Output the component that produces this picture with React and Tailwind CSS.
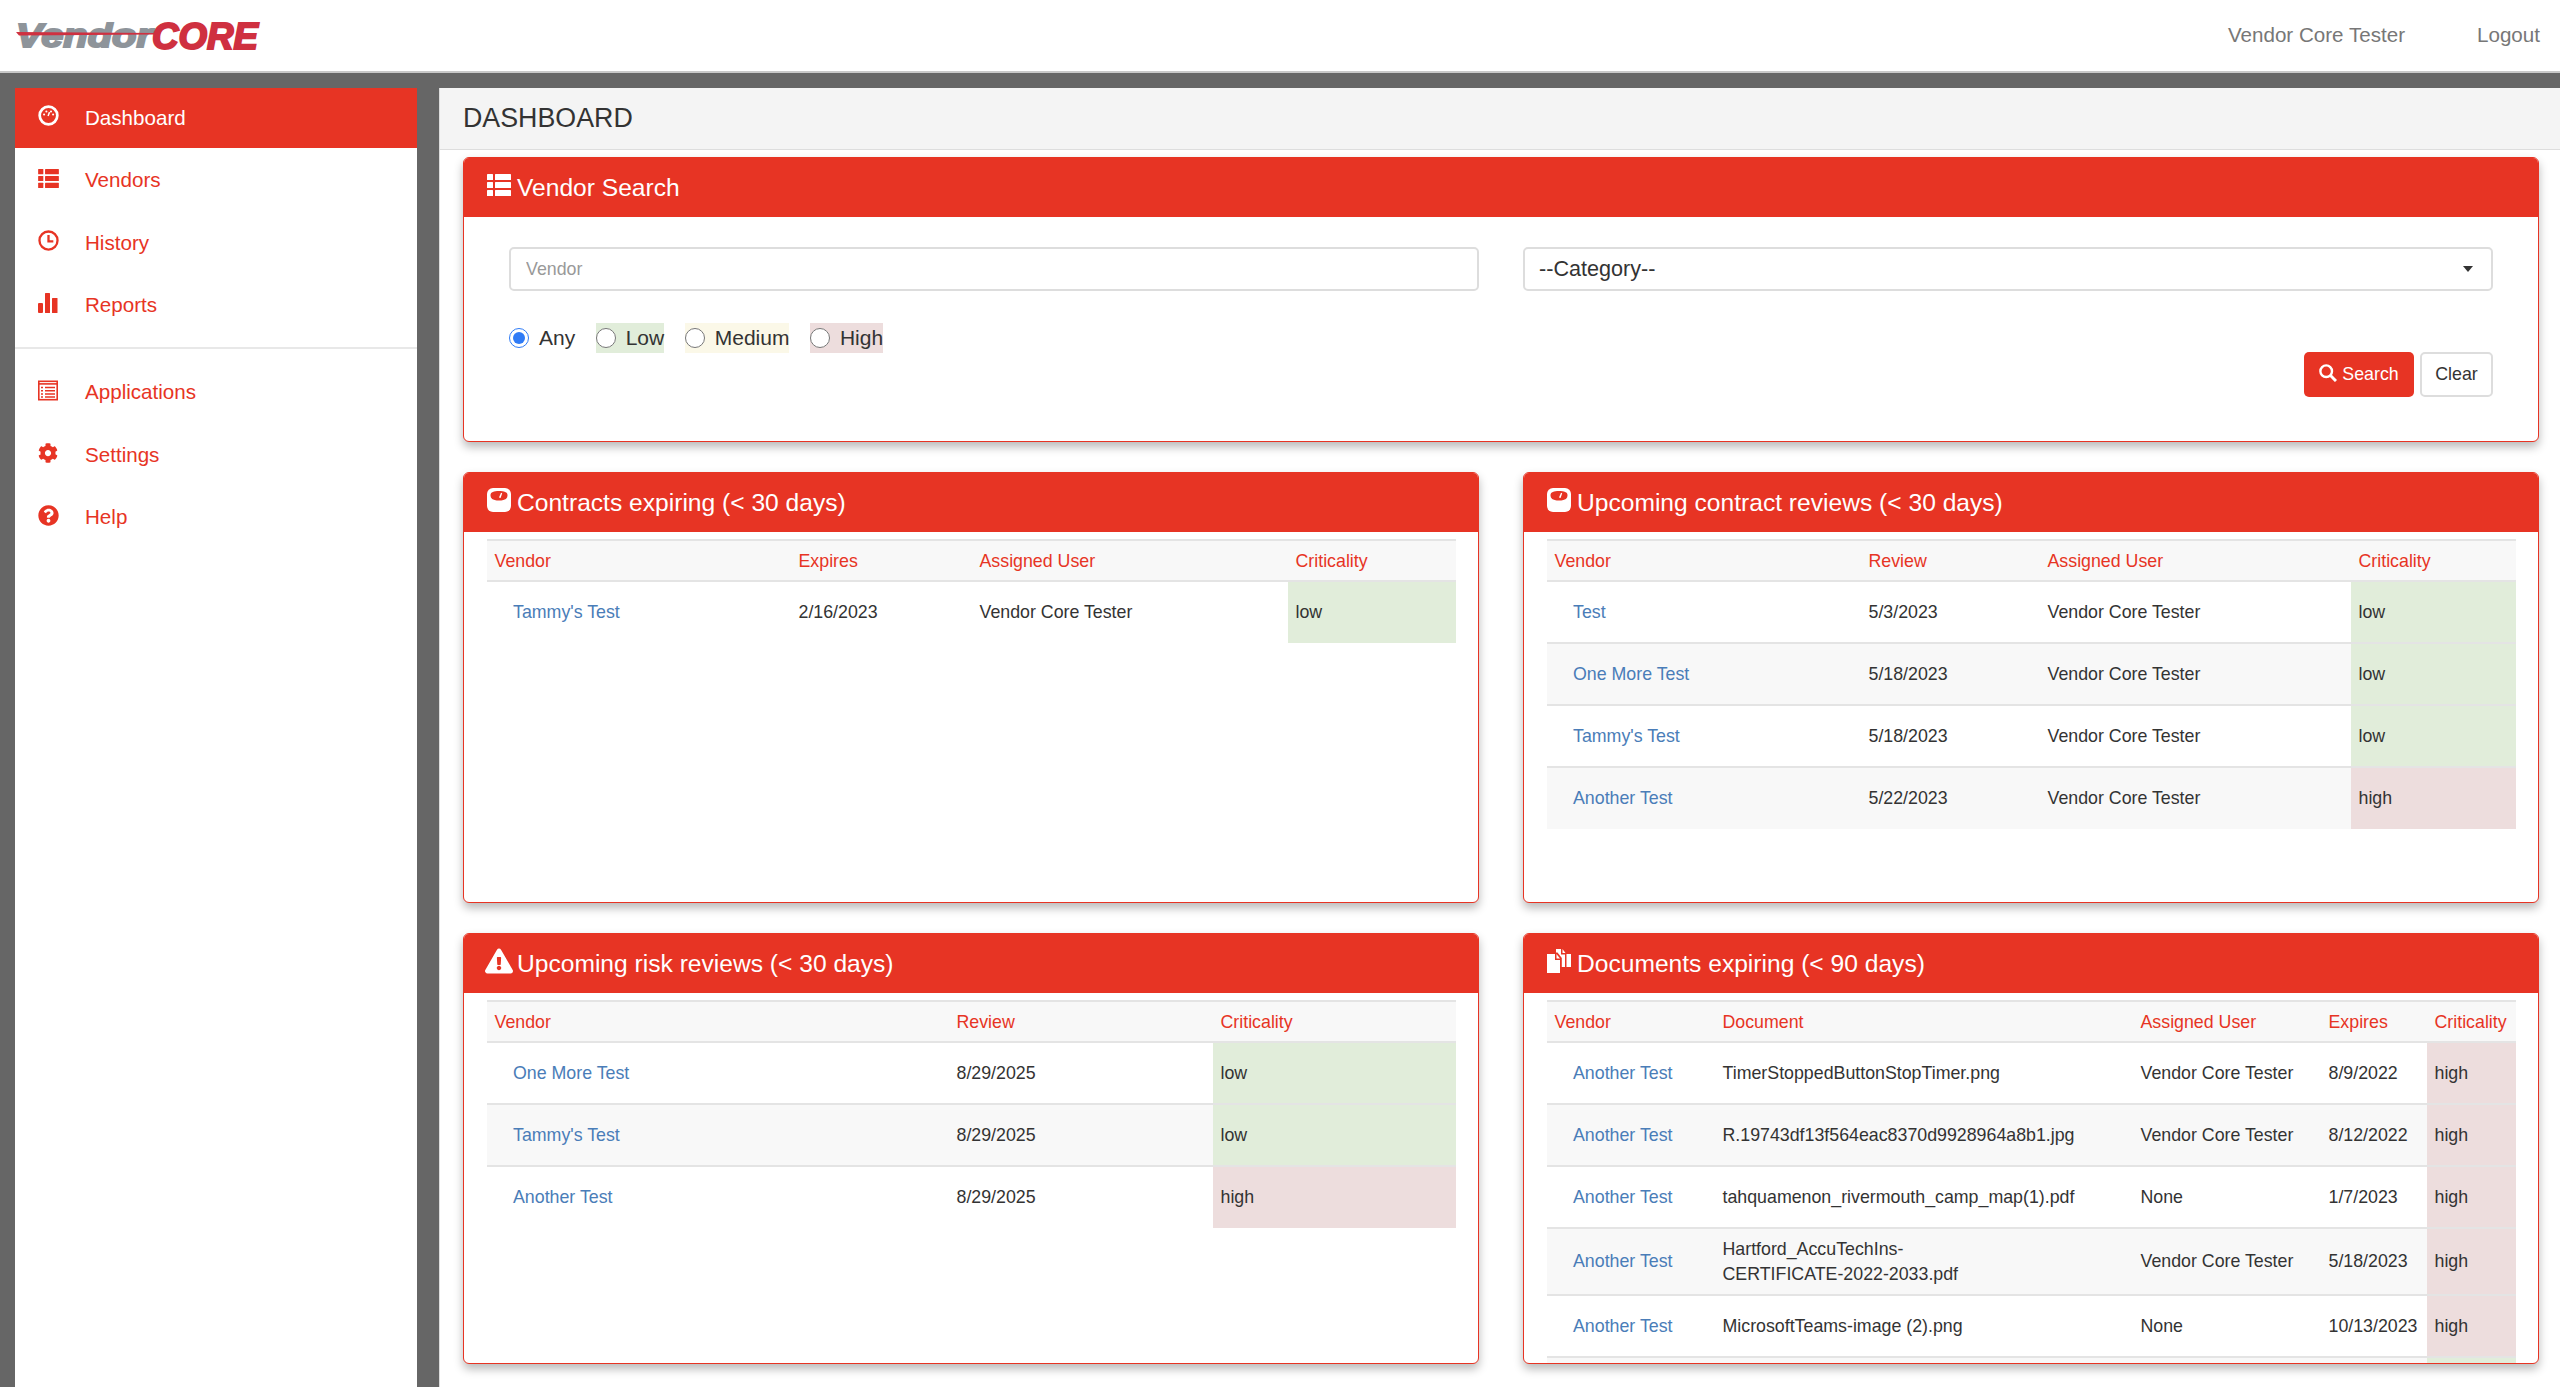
import { FaCog, FaExclamationTriangle, FaQuestionCircle } from "react-icons/fa";

const font = { fontFamily: '"Liberation Sans", Arial, sans-serif' };

const DashIcon = () => (
    <svg viewBox="0 0 20 20" className="w-[21px] h-[21px]">
        <circle cx="10" cy="10" r="8.4" fill="none" stroke="currentColor" strokeWidth="2.6" />
        <circle cx="5.8" cy="9" r="1" fill="currentColor" />
        <circle cx="8" cy="6.2" r="1" fill="currentColor" />
        <circle cx="12.4" cy="6.2" r="1" fill="currentColor" />
        <circle cx="14.4" cy="9" r="1" fill="currentColor" />
        <path d="M9.6 10.4 L11 6.8" stroke="currentColor" strokeWidth="1.4" />
    </svg>
);

const ListIcon = ({ className }) => (
    <svg viewBox="0 0 24 22" className={className} fill="currentColor">
        <rect x="0" y="0" width="6" height="6" rx="0.6" />
        <rect x="8" y="0" width="16" height="6" rx="0.6" />
        <rect x="0" y="8" width="6" height="6" rx="0.6" />
        <rect x="8" y="8" width="16" height="6" rx="0.6" />
        <rect x="0" y="16" width="6" height="6" rx="0.6" />
        <rect x="8" y="16" width="16" height="6" rx="0.6" />
    </svg>
);

const ClockIcon = () => (
    <svg viewBox="0 0 20 20" className="w-[21px] h-[21px]" fill="none" stroke="currentColor">
        <circle cx="10" cy="10" r="8.6" strokeWidth="2.2" />
        <path d="M10 4.8 V10.8 H14.6" strokeWidth="2.2" />
    </svg>
);

const StatsIcon = () => (
    <svg viewBox="0 0 20 20" className="w-[20px] h-[20px]" fill="currentColor">
        <rect x="0" y="10" width="5" height="10" rx="1" />
        <rect x="7" y="0" width="5" height="20" rx="0.5" />
        <rect x="14" y="5" width="5.5" height="15" rx="0.5" />
    </svg>
);

const AppIcon = () => (
    <svg viewBox="0 0 20 20" className="w-[20px] h-[21px]" fill="none" stroke="currentColor">
        <rect x="0.8" y="0.8" width="18.4" height="18.4" strokeWidth="1.6" />
        <path d="M0 3.4 H20" strokeWidth="1.6" />
        <path d="M3 7 H5 M7 7 H17 M3 10.2 H5 M7 10.2 H17 M3 13.4 H5 M7 13.4 H17 M3 16.4 H5 M7 16.4 H17" strokeWidth="1.5" />
    </svg>
);

const ScaleIcon = () => (
    <svg viewBox="0 0 24 24" className="w-[24px] h-[24px]">
        <rect x="0" y="0" width="24" height="24" rx="6" fill="currentColor" />
        <path d="M3.5 7 C3.5 4 7 3 12 3 C17 3 20.5 4 20.5 7 C20.5 10 19 12.5 12 12.5 C5 12.5 3.5 10 3.5 7 Z" fill="#e73424" />
        <path d="M12 9.5 L14 4.8 L15.2 5.2 L13.6 10 Z" fill="currentColor" />
    </svg>
);

const DocsIcon = () => (
    <svg viewBox="0 0 24 24" className="w-[24px] h-[24px]" fill="currentColor">
        <path d="M0 5 H8 V11 H13 V24 H0 Z" />
        <path d="M9.5 5 L13 9.5 H9.5 Z" />
        <path d="M9 0 H14 V5.5 H18 V18 H14.8 V9 L10.5 3.5 H9 Z" />
        <path d="M15.5 0 L18.5 4 H15.5 Z" />
        <path d="M19.5 5 H24 V18 H19.5 Z" />
    </svg>
);

const SearchIcon = () => (
    <svg viewBox="0 0 18 18" className="w-[18px] h-[18px] -mt-[4px]" fill="none" stroke="currentColor">
        <circle cx="7.2" cy="7.2" r="5.8" strokeWidth="2.4" />
        <path d="M11.5 11.5 L17 17" strokeWidth="3" />
    </svg>
);

const Logo = () => (
    <svg viewBox="0 0 250 44" className="w-[250px] h-[44px]" style={font}>
        <text x="1" y="33" fontSize="33" fontWeight="700" fontStyle="italic" fill="#8e949a" stroke="#8e949a" strokeWidth="2" textLength="136" lengthAdjust="spacingAndGlyphs">Vendor</text>
        <text x="137" y="35" fontSize="37" fontWeight="700" fontStyle="italic" fill="#cf3040" stroke="#cf3040" strokeWidth="2" textLength="106" lengthAdjust="spacingAndGlyphs">CORE</text>
        <path d="M1 18 L140 19 L140 20.5 L4 21.5 Z" fill="#cf3040" />
    </svg>
);

const navTop = [
    { label: "Dashboard", icon: <DashIcon />, active: true },
    { label: "Vendors", icon: <ListIcon className="w-[21px] h-[19px]" /> },
    { label: "History", icon: <ClockIcon /> },
    { label: "Reports", icon: <StatsIcon /> },
];

const navBottom = [
    { label: "Applications", icon: <AppIcon /> },
    { label: "Settings", icon: <FaCog className="w-[20px] h-[20px]" /> },
    { label: "Help", icon: <FaQuestionCircle className="w-[21px] h-[21px]" /> },
];

const NavItem = ({ item }) => (
    <div className={`flex items-center h-[60px] mb-[2.5px] text-[20.6px] ${item.active ? "bg-[#e73424] text-white" : "text-[#e73424]"}`}>
        <span className="w-[70px] pl-[21px] flex -mt-[5px]">
            <span className="w-[24px] flex justify-center">{item.icon}</span>
        </span>
        <span>{item.label}</span>
    </div>
);

const Card = ({ icon, title, height, children }) => (
    <div className={`bg-white border-[1.5px] border-[#e73424] rounded-[6px] shadow-[0_5px_10px_rgba(0,0,0,0.28)] overflow-hidden ${height}`}>
        <div className="h-[59px] bg-[#e73424] text-white flex items-center pl-[23px] text-[24.6px]">
            <span className="w-[30px] flex -mt-[5px]">{icon}</span>
            <span className="pt-[2px]">{title}</span>
        </div>
        {children}
    </div>
);

const critBg = { low: "bg-[#e1edda]", high: "bg-[#eddddd]" };

const DataTable = ({ columns, widths, rows }) => (
    <div className="px-[23px] pt-[7px]">
        <table className="table-fixed w-full border-collapse text-[17.8px] text-[#333]">
            <colgroup>
                {widths.map((w, i) => <col key={i} className={w} />)}
            </colgroup>
            <thead>
                <tr className="h-[41px] bg-[#f8f8f8] border-t-2 border-b-2 border-[#e4e4e4] text-[#e73424]">
                    {columns.map((c) => (
                        <th key={c} className="text-left font-normal px-[7.5px] pt-[1px]">{c}</th>
                    ))}
                </tr>
            </thead>
            <tbody>
                {rows.map((row, i) => (
                    <tr key={i} className={`${row.tall ? "h-[67px]" : "h-[62px]"} ${i % 2 ? "bg-[#f8f8f8]" : "bg-white"} ${i ? "border-t-2 border-[#e4e4e4]" : ""}`}>
                        <td className="pl-[26px] pr-[8px] text-[#4a7db8]">{row.cells[0]}</td>
                        {row.cells.slice(1).map((cell, j) => (
                            <td key={j} className="px-[7.5px] leading-[25px]">
                                {Array.isArray(cell) ? cell.map((line) => <div key={line}>{line}</div>) : cell}
                            </td>
                        ))}
                        <td className={`px-[7.5px] ${critBg[row.crit]}`}>{row.hideCrit ? "" : row.crit}</td>
                    </tr>
                ))}
            </tbody>
        </table>
    </div>
);

const Radio = ({ label, bg, checked }) => (
    <label className={`flex items-center h-[30px] gap-[10px] ${bg || ""}`}>
        <input type="radio" name="crit" defaultChecked={checked} className="w-[20px] h-[20px] m-0 accent-[#2f7bf6]" />
        <span>{label}</span>
    </label>
);

const vct = "Vendor Core Tester";

export default function App() {
    return (
        <div className="h-screen overflow-hidden flex flex-col bg-[#666]" style={font}>
            <header className="h-[73px] shrink-0 bg-white border-b-2 border-[#c8c8c8] flex items-center justify-between pl-[15px] pr-[20px] text-[20.6px] text-[#777]">
                <Logo />
                <div className="flex gap-[72px]">
                    <span>{vct}</span>
                    <span>Logout</span>
                </div>
            </header>
            <div className="flex flex-1 min-h-0 pt-[15px] pl-[15px]">
                <aside className="w-[402px] shrink-0 bg-white">
                    {navTop.map((item) => <NavItem key={item.label} item={item} />)}
                    <div className="border-t-2 border-[#e8e8e8] mt-[11px] mb-[14px]" />
                    {navBottom.map((item) => <NavItem key={item.label} item={item} />)}
                </aside>
                <main className="ml-[22px] flex-1 bg-white border-l border-[#ddd]">
                    <div className="h-[62px] bg-[#f4f4f4] border-b border-[#ddd] flex items-center pl-[23px] text-[26.8px] text-[#333]">DASHBOARD</div>
                    <div className="pl-[23px] pr-[21px] pt-[7px] flex flex-col gap-[30px]">
                        <Card icon={<ListIcon className="w-[24px] h-[22px]" />} title="Vendor Search" height="h-[285px]">
                            <div className="px-[45px] pt-[30px]">
                                <div className="grid grid-cols-2 gap-[44px]">
                                    <input placeholder="Vendor" className="h-[44px] px-[15px] border-2 border-[#ddd] rounded-[5px] text-[17.8px] placeholder:text-[#999] outline-none" />
                                    <div className="relative">
                                        <select defaultValue="" className="appearance-none w-full h-[44px] px-[14px] border-2 border-[#ddd] rounded-[5px] bg-white text-[21.6px] text-[#333] outline-none">
                                            <option value="">--Category--</option>
                                        </select>
                                        <span className="absolute right-[20px] top-[19px] border-x-[5px] border-x-transparent border-t-[6px] border-t-[#333]" />
                                    </div>
                                </div>
                                <div className="flex items-center gap-[20.5px] mt-[32px] text-[21px] text-[#333]">
                                    <Radio label="Any" checked />
                                    <Radio label="Low" bg="bg-[#e1edda]" />
                                    <Radio label="Medium" bg="bg-[#fbf8e8]" />
                                    <Radio label="High" bg="bg-[#eddddd]" />
                                </div>
                                <div className="flex justify-end gap-[6px] -mt-[1px] text-[17.8px]">
                                    <button className="h-[45px] w-[110px] rounded-[5px] bg-[#e73424] text-white flex items-center justify-center gap-[5px]">
                                        <SearchIcon />Search
                                    </button>
                                    <button className="h-[45px] w-[73px] rounded-[5px] border-2 border-[#ddd] bg-white text-[#333]">Clear</button>
                                </div>
                            </div>
                        </Card>
                        <div className="grid grid-cols-2 gap-x-[44px] gap-y-[30px]">
                            <Card icon={<ScaleIcon />} title="Contracts expiring (< 30 days)" height="h-[431px]">
                                <DataTable
                                    columns={["Vendor", "Expires", "Assigned User", "Criticality"]}
                                    widths={["w-[304px]", "w-[181px]", "w-[316px]", "w-[168px]"]}
                                    rows={[{ cells: ["Tammy's Test", "2/16/2023", vct], crit: "low" }]}
                                />
                            </Card>
                            <Card icon={<ScaleIcon />} title="Upcoming contract reviews (< 30 days)" height="h-[431px]">
                                <DataTable
                                    columns={["Vendor", "Review", "Assigned User", "Criticality"]}
                                    widths={["w-[314px]", "w-[179px]", "w-[311px]", "w-[165px]"]}
                                    rows={[
                                        { cells: ["Test", "5/3/2023", vct], crit: "low" },
                                        { cells: ["One More Test", "5/18/2023", vct], crit: "low" },
                                        { cells: ["Tammy's Test", "5/18/2023", vct], crit: "low" },
                                        { cells: ["Another Test", "5/22/2023", vct], crit: "high" },
                                    ]}
                                />
                            </Card>
                            <Card icon={<FaExclamationTriangle className="w-[28px] h-[26px] -ml-[2px]" />} title="Upcoming risk reviews (< 30 days)" height="h-[431px]">
                                <DataTable
                                    columns={["Vendor", "Review", "Criticality"]}
                                    widths={["w-[462px]", "w-[264px]", "w-[243px]"]}
                                    rows={[
                                        { cells: ["One More Test", "8/29/2025"], crit: "low" },
                                        { cells: ["Tammy's Test", "8/29/2025"], crit: "low" },
                                        { cells: ["Another Test", "8/29/2025"], crit: "high" },
                                    ]}
                                />
                            </Card>
                            <Card icon={<DocsIcon />} title="Documents expiring (< 90 days)" height="h-[431px]">
                                <DataTable
                                    columns={["Vendor", "Document", "Assigned User", "Expires", "Criticality"]}
                                    widths={["w-[168px]", "w-[418px]", "w-[188px]", "w-[106px]", "w-[89px]"]}
                                    rows={[
                                        { cells: ["Another Test", "TimerStoppedButtonStopTimer.png", vct, "8/9/2022"], crit: "high" },
                                        { cells: ["Another Test", "R.19743df13f564eac8370d9928964a8b1.jpg", vct, "8/12/2022"], crit: "high" },
                                        { cells: ["Another Test", "tahquamenon_rivermouth_camp_map(1).pdf", "None", "1/7/2023"], crit: "high" },
                                        { cells: ["Another Test", ["Hartford_AccuTechIns-", "CERTIFICATE-2022-2033.pdf"], vct, "5/18/2023"], crit: "high", tall: true },
                                        { cells: ["Another Test", "MicrosoftTeams-image (2).png", "None", "10/13/2023"], crit: "high" },
                                        { cells: ["", "", "", ""], crit: "low", hideCrit: true },
                                    ]}
                                />
                            </Card>
                        </div>
                    </div>
                </main>
            </div>
        </div>
    );
}
